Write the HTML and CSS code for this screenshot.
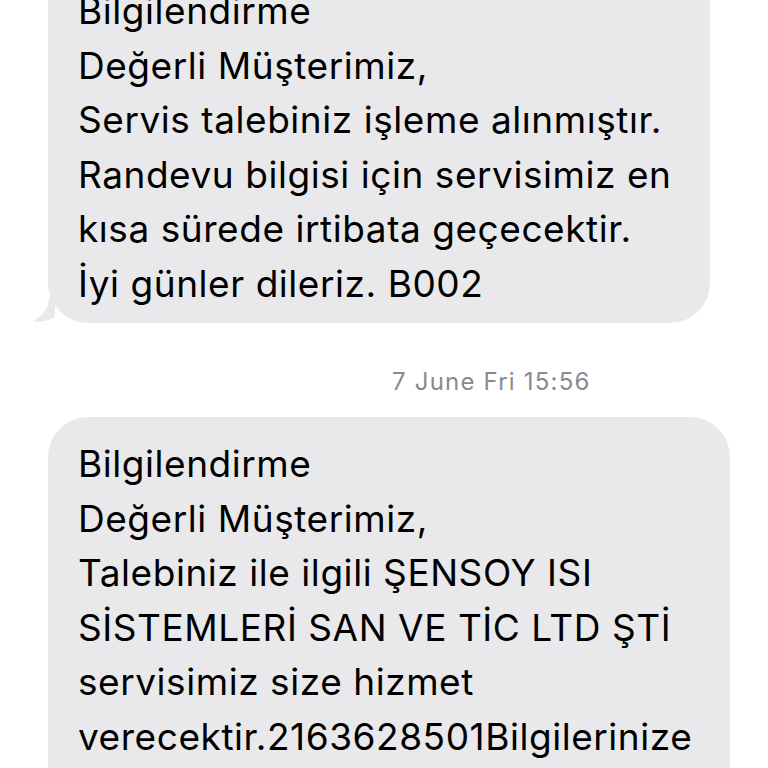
FILE: index.html
```html
<!DOCTYPE html>
<html lang="tr">

<head>
    <meta charset="UTF-8">
    <meta name="viewport" content="width=device-width, initial-scale=1.0">
    <title>Mesajlar</title>
    <link rel="stylesheet" href="styles.css">
</head>

<body>
    <div class="thread">
        <div class="bubble first">
            <p>Bilgilendirme<br>
            Değerli Müşterimiz,<br>
            Servis talebiniz işleme alınmıştır.<br>
            Randevu bilgisi için servisimiz en<br>
            kısa sürede irtibata geçecektir.<br>
            İyi günler dileriz. B002</p>
            <svg class="tail" width="22" height="26" viewBox="0 0 22 26">
                <path d="M16 0 C16 10 10 20 0 24 C6 26 14 24 22 20 L22 0 Z" fill="#e9e9eb"/>
            </svg>
        </div>

        <div class="stamp">7 June Fri 15:56</div>

        <div class="bubble">
            <p>Bilgilendirme<br>
            Değerli Müşterimiz,<br>
            Talebiniz ile ilgili ŞENSOY ISI<br>
            SİSTEMLERİ SAN VE TİC LTD ŞTİ<br>
            servisimiz size hizmet<br>
            verecektir.2163628501Bilgilerinize<br>
            sunarız.İyi günler dileriz.</p>
        </div>
    </div>
</body>

</html>
```

FILE: styles.css
```css
body {
    margin: 0;
    padding: 0;
    background-color: #ffffff;
    font-family: Inter, "Liberation Sans", Arial, sans-serif;
    overflow: hidden;
    height: 768px;
}

.thread {
    display: flex;
    flex-direction: column;
    align-items: flex-start;
    padding-left: 48px;
}

.bubble {
    position: relative;
    background-color: #e9e9eb;
    border-radius: 40px;
    padding: 20px 38px 12px 30px;
    color: #000000;
}

.bubble.first {
    margin-top: -36px;
}

.bubble p {
    margin: 0;
    font-size: 37px;
    line-height: 54.5px;
    letter-spacing: 0.55px;
    white-space: nowrap;
}

.tail {
    position: absolute;
    left: -15px;
    bottom: 0;
}

.stamp {
    margin: 44px 0 0 344px;
    height: 50px;
    font-size: 24px;
    letter-spacing: 1.2px;
    color: #8a8a8e;
}
```
